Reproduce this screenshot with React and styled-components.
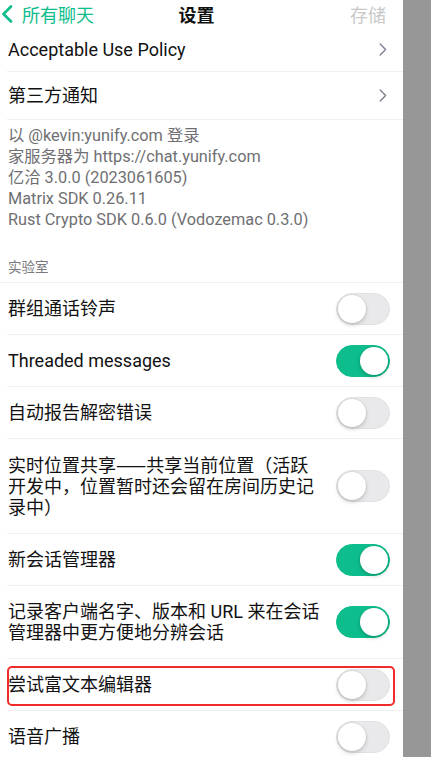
import styled, { createGlobalStyle } from "styled-components";

const GlobalStyle = createGlobalStyle`
  html, body {
    margin: 0;
    padding: 0;
    background: #ffffff;
    overflow: hidden;
  }
  body {
    font-family: "Roboto", "Noto Sans CJK SC", sans-serif;
  }
`;

const Cjk = styled.span`
  font-family: "Noto Sans CJK SC", sans-serif;
`;

const labs = [
  { label: "群组通话铃声", on: false },
  { label: "Threaded messages", on: true },
  { label: "自动报告解密错误", on: false },
  {
    label: (
      <>
        实时位置共享<Cjk>——</Cjk>共享当前位置（活跃开发中，位置暂时还会留在房间历史记录中）
      </>
    ),
    key: "location",
    on: false,
  },
  { label: "新会话管理器", on: true },
  { label: "记录客户端名字、版本和 URL 来在会话管理器中更方便地分辨会话", on: true },
  { label: "尝试富文本编辑器", on: false, marked: true },
  { label: "语音广播", on: false },
];

const info = [
  "以 @kevin:yunify.com 登录",
  "家服务器为 https://chat.yunify.com",
  "亿洽 3.0.0 (2023061605)",
  "Matrix SDK 0.26.11",
  "Rust Crypto SDK 0.6.0 (Vodozemac 0.3.0)",
];

const App = () => {
  return (
    <Screen>
      <GlobalStyle />
      <Main>
        <NavBar>
          <BackButton>
            <svg width="12" height="18" viewBox="0 0 12 18">
              <path d="M10 1.5 L2.5 9 L10 16.5" fill="none" stroke="#0dbd8b" strokeWidth="2.6" strokeLinecap="round" strokeLinejoin="round" />
            </svg>
            <span>所有聊天</span>
          </BackButton>
          <Title>设置</Title>
          <SaveButton>存储</SaveButton>
        </NavBar>

        <LinkRow $tight>
          <Label>Acceptable Use Policy</Label>
          <Chevron />
        </LinkRow>
        <LinkRow>
          <Label>第三方通知</Label>
          <Chevron />
        </LinkRow>

        <Footer>
          {info.map((line) => (
            <div key={line}>{line}</div>
          ))}
        </Footer>

        <SectionHeader>实验室</SectionHeader>

        {labs.map((item) => (
          <ToggleRow key={item.key || item.label}>
            <Label $wrap>{item.label}</Label>
            <Switch $on={item.on}>
              <Knob $on={item.on} />
            </Switch>
            {item.marked && <Highlight />}
          </ToggleRow>
        ))}
      </Main>
      <Dimmer />
    </Screen>
  );
};

const Chevron = () => (
  <ChevronBox>
    <svg width="8" height="13" viewBox="0 0 8 13">
      <path d="M1.2 1 L6.6 6.5 L1.2 12" fill="none" stroke="#7d8290" strokeWidth="1.4" strokeLinecap="round" strokeLinejoin="round" />
    </svg>
  </ChevronBox>
);

const Screen = styled.div`
  display: flex;
  width: 431px;
  height: 757px;
  overflow: hidden;
`;

const Main = styled.div`
  flex: 1;
  display: flex;
  flex-direction: column;
  background: #ffffff;
`;

const Dimmer = styled.div`
  width: 28px;
  background: #979797;
`;

const NavBar = styled.div`
  display: grid;
  grid-template-columns: 1fr auto 1fr;
  align-items: center;
  height: 27px;
  padding-right: 10px;
  font-size: 18px;
  flex-shrink: 0;
`;

const BackButton = styled.div`
  display: flex;
  align-items: center;
  gap: 9px;
  color: #0dbd8b;
  padding-left: 1px;
  svg {
    display: block;
  }
`;

const Title = styled.div`
  font-weight: 600;
  color: #111111;
`;

const SaveButton = styled.div`
  justify-self: end;
  margin-right: 7px;
  color: #c9c9c9;
`;

const LinkRow = styled.div`
  display: flex;
  align-items: center;
  justify-content: space-between;
  margin-left: 7px;
  padding: ${(p) => (p.$tight ? "11.5px" : "13px")} 16px ${(p) => (p.$tight ? "11.5px" : "13px")} 1px;
  border-bottom: 1px solid #efefef;
  flex-shrink: 0;
`;

const Label = styled.div`
  font-size: 18px;
  line-height: 21px;
  color: #111111;
  padding: ${(p) => (p.$wrap ? "15px 0" : "0")};
  max-width: ${(p) => (p.$wrap ? "316px" : "none")};
`;

const ChevronBox = styled.div`
  display: flex;
  align-items: center;
  svg {
    display: block;
  }
`;

const Footer = styled.div`
  padding: 5px 0 0 8px;
  font-size: 16.3px;
  line-height: 21px;
  color: #6f6f73;
  flex-shrink: 0;
`;

const SectionHeader = styled.div`
  padding: 28px 0 6px 8px;
  font-size: 13.5px;
  line-height: 18px;
  color: #7a7a7e;
  border-bottom: 1px solid #efefef;
  flex-shrink: 0;
`;

const ToggleRow = styled.div`
  position: relative;
  display: flex;
  align-items: center;
  justify-content: space-between;
  margin-left: 7px;
  padding: 0 13px 0 1px;
  border-bottom: 1px solid #efefef;
  flex-shrink: 0;
`;

const Switch = styled.div`
  position: relative;
  flex-shrink: 0;
  width: 54px;
  height: 32px;
  border-radius: 16px;
  box-sizing: border-box;
  background: ${(p) => (p.$on ? "#0dbd8b" : "#e9e9eb")};
  border: 1px solid ${(p) => (p.$on ? "#0dbd8b" : "#e2e2e4")};
`;

const Knob = styled.div`
  position: absolute;
  top: 1px;
  left: ${(p) => (p.$on ? "23px" : "1px")};
  width: 28px;
  height: 28px;
  border-radius: 50%;
  background: #ffffff;
  box-shadow: 0 2px 4px rgba(0, 0, 0, 0.18), 0 0 0 0.5px rgba(0, 0, 0, 0.08);
`;

const Highlight = styled.div`
  position: absolute;
  top: 7px;
  bottom: 4px;
  left: 0;
  right: 8px;
  border: 2px solid #f12a2a;
  border-radius: 5px;
  pointer-events: none;
`;

export default App;
